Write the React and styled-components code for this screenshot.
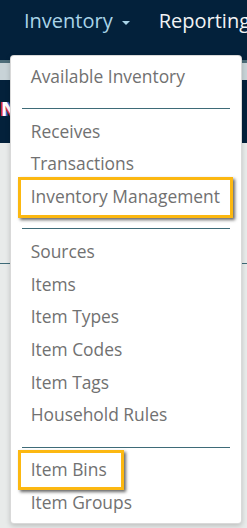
import React from "react";
import styled, { createGlobalStyle } from "styled-components";

const Global = createGlobalStyle`
  html, body { margin: 0; padding: 0; height: 100%; overflow: hidden; }
  body { font-family: "Open Sans", "Noto Sans", sans-serif; background: #e8ebea; }
  #root { min-height: 100vh; }
`;

const Page = styled.div`
  display: flex;
  flex-direction: column;
  min-height: 100vh;
  background: #e8ebea;
`;

const Navbar = styled.nav`
  display: flex;
  align-items: flex-start;
  gap: 29px;
  height: 60px;
  padding-left: 24px;
  background: #03213b;
  box-sizing: border-box;
`;

const NavItem = styled.div`
  position: relative;
  display: flex;
  align-items: center;
  gap: 9px;
  padding-top: 6px;
  font-size: 20px;
  line-height: 30px;
  color: ${(p) => (p.$active ? "#a9d4e8" : "#f2f4f5")};
  white-space: nowrap;
`;

const Caret = styled.span`
  display: inline-block;
  width: 0;
  height: 0;
  margin-top: 3px;
  border-left: 4px solid transparent;
  border-right: 4px solid transparent;
  border-top: 4px solid #a9d4e8;
`;

const Stripe = styled.div`
  height: 3px;
  background: #4d6d79;
`;

const SubBar = styled.div`
  height: 17px;
  background: #c8d3d7;
`;

const Banner = styled.div`
  display: flex;
  align-items: center;
  height: 63px;
  background: #03213b;
  overflow: hidden;
`;

const Logo = styled.span`
  margin-left: 1px;
  margin-top: -6px;
  font-size: 20px;
  font-weight: 700;
  color: #ffffff;
  text-shadow: -2px 0 #e0303a, 2px 0 #3b6fd8;
`;

const Content = styled.main`
  flex: 1;
  padding-top: 120px;
  display: flex;
  flex-direction: column;
`;

const Panel = styled.section`
  flex: 1;
  border-top: 1px solid #3e6b78;
`;

const Menu = styled.div`
  position: absolute;
  top: 55px;
  left: -14px;
  width: 232px;
  box-sizing: border-box;
  padding: 4px 0 5px;
  background: #ffffff;
  border: 1px solid rgba(0, 0, 0, 0.15);
  border-radius: 4px;
  box-shadow: 0 2px 5px rgba(0, 0, 0, 0.18);
  z-index: 10;
`;

const MenuItem = styled.a`
  position: relative;
  display: block;
  padding: 4px 0 4px 19.7px;
  font-size: 17.4px;
  line-height: 24.7px;
  color: #717171;
  text-decoration: none;
  white-space: nowrap;

  ${(p) =>
    p.$highlight &&
    `
    &::after {
      content: "";
      position: absolute;
      top: -3px;
      left: 7px;
      right: ${p.$highlight.right}px;
      bottom: ${p.$highlight.bottom}px;
      border: 3px solid #fcb811;
      box-shadow: 2px 2px 3px rgba(0, 0, 0, 0.6);
      pointer-events: none;
    }
  `}
`;

const Divider = styled.div`
  height: 1px;
  margin: 15.5px 11px 5.5px 11px;
  background: #3e6b78;
`;

const groups = [
  ["Available Inventory"],
  ["Receives", "Transactions", "Inventory Management"],
  ["Sources", "Items", "Item Types", "Item Codes", "Item Tags", "Household Rules"],
  ["Item Bins", "Item Groups"],
];

const highlights = {
  "Inventory Management": { right: 8, bottom: -5 },
  "Item Bins": { right: 117, bottom: -4 },
};

export default function App() {
  return (
    <Page>
      <Global />
      <Navbar>
        <NavItem $active>
          Inventory
          <Caret />
          <Menu>
            {groups.map((g, i) => (
              <React.Fragment key={i}>
                {i > 0 && <Divider />}
                {g.map((label) => (
                  <MenuItem key={label} href="#" $highlight={highlights[label]}>
                    {label}
                  </MenuItem>
                ))}
              </React.Fragment>
            ))}
          </Menu>
        </NavItem>
        <NavItem>Reporting</NavItem>
      </Navbar>
      <Stripe />
      <SubBar />
      <Banner>
        <Logo>N</Logo>
      </Banner>
      <Content>
        <Panel />
      </Content>
    </Page>
  );
}
